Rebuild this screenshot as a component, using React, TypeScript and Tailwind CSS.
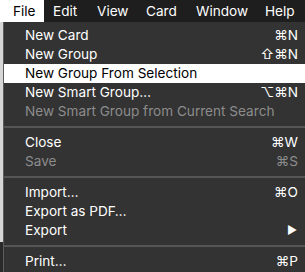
import React from "react";

type Item =
  | { kind: "item"; label: string; shortcut?: string; disabled?: boolean; active?: boolean; submenu?: boolean }
  | { kind: "sep" };

const items: Item[] = [
  { kind: "item", label: "New Card", shortcut: "⌘N" },
  { kind: "item", label: "New Group", shortcut: "⇧⌘N" },
  { kind: "item", label: "New Group From Selection", active: true },
  { kind: "item", label: "New Smart Group…", shortcut: "⌥⌘N" },
  { kind: "item", label: "New Smart Group from Current Search", disabled: true },
  { kind: "sep" },
  { kind: "item", label: "Close", shortcut: "⌘W" },
  { kind: "item", label: "Save", shortcut: "⌘S", disabled: true },
  { kind: "sep" },
  { kind: "item", label: "Import…", shortcut: "⌘O" },
  { kind: "item", label: "Export as PDF…" },
  { kind: "item", label: "Export", submenu: true },
  { kind: "sep" },
  { kind: "item", label: "Print…", shortcut: "⌘P" },
];

export default function App() {
  return (
    <div
      className="w-[305px] h-[272px] overflow-hidden bg-[#333333] flex flex-col text-[13.6px]"
      style={{ fontFamily: "Inter, 'Liberation Sans', sans-serif" }}
    >
      <div className="h-[22px] bg-[#1e1e1e] flex items-stretch text-white shrink-0 whitespace-nowrap">
        <div className="w-[44px] bg-white text-black pl-[13px] flex items-center">File</div>
        <div className="w-[44px] pl-[9px] flex items-center">Edit</div>
        <div className="w-[49px] pl-[9px] flex items-center">View</div>
        <div className="w-[50px] pl-[9px] flex items-center">Card</div>
        <div className="w-[69px] pl-[9px] flex items-center">Window</div>
        <div className="w-[49px] pl-[9px] flex items-center">Help</div>
      </div>
      <div className="flex flex-1">
        <div className="w-[3px] flex flex-col shrink-0">
          <div className="flex-1 bg-[#d6d6d6]" />
          <div className="h-[30px] bg-[#2a2a2a]" />
        </div>
        <div className="w-[1px] bg-[#5c5c5c] shrink-0" />
        <div className="flex-1 flex flex-col pt-[4px]">
          {items.map((it, idx) =>
            it.kind === "sep" ? (
              <div key={idx} className="h-[12px] flex items-center">
                <div className="h-[2px] w-full bg-[#555555]" />
              </div>
            ) : (
              <div
                key={idx}
                className={
                  "h-[19px] flex items-center pl-[21px] pr-[7px] " +
                  (it.active
                    ? "bg-white text-black"
                    : it.disabled
                    ? "text-[#8c8c8c]"
                    : "text-white")
                }
              >
                <span className="flex-1 whitespace-nowrap">{it.label}</span>
                {it.shortcut && <span className="whitespace-nowrap">{it.shortcut}</span>}
                {it.submenu && <span className="text-[11px] pr-[1px]">▶</span>}
              </div>
            )
          )}
        </div>
      </div>
    </div>
  );
}
